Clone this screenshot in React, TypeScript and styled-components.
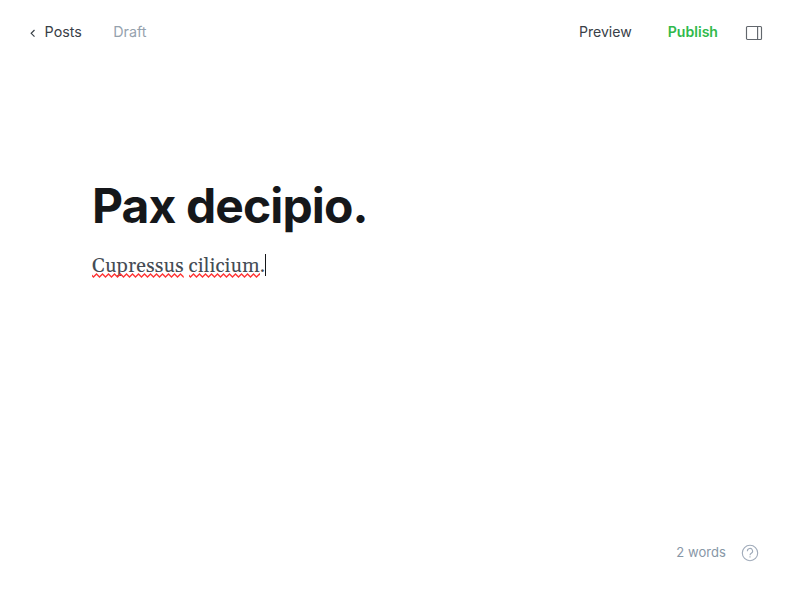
import React from "react";
import styled, { createGlobalStyle } from "styled-components";

const GlobalStyle = createGlobalStyle`
  * { box-sizing: border-box; }
  body { margin: 0; background: #fff; font-family: Inter, "Liberation Sans", sans-serif; }
`;

const Editor = styled.div`
  display: flex;
  flex-direction: column;
  width: 100%;
  height: 100vh;
  overflow: hidden;
`;

const Header = styled.header`
  display: flex;
  align-items: center;
  justify-content: space-between;
  height: 66px;
  padding: 0 37px 0 29px;
`;

const Group = styled.div`
  display: flex;
  align-items: center;
`;

const BackLink = styled.button`
  display: flex;
  align-items: center;
  gap: 7.6px;
  margin-right: 31.4px;
  padding: 0;
  border: 0;
  background: none;
  color: #394047;
  font: 400 14.3px/20px Inter, sans-serif;
`;

const Label = styled.span`
  padding-bottom: 2px;
`;

const Status = styled.span`
  padding-bottom: 2px;
  color: #95a1ad;
  font-size: 14.3px;
  line-height: 20px;
`;

const Action = styled.button<{ $primary?: boolean }>`
  margin-right: ${(p) => (p.$primary ? 27 : 36)}px;
  padding: 0 0 2px;
  border: 0;
  background: none;
  color: ${(p) => (p.$primary ? "#30b94b" : "#394047")};
  font: ${(p) => (p.$primary ? 600 : 400)} 14.1px/20px Inter, sans-serif;
`;

const Main = styled.main`
  flex: 1;
  padding: 112px 92px 0;
`;

const Title = styled.h1`
  margin: 0;
  color: #15171a;
  font-size: 48px;
  font-weight: 700;
  line-height: 56px;
  letter-spacing: -0.9px;
`;

const Body = styled.p`
  display: flex;
  align-items: center;
  margin: 16px 0 0;
  color: #454c54;
  font: 400 20px/32px Gelasio, Georgia, "Liberation Serif", serif;
  letter-spacing: 0.07px;
`;

const Misspelled = styled.span`
  position: relative;
`;

const Squiggle = styled.svg`
  position: absolute;
  left: 0;
  bottom: 1px;
  width: 100%;
  height: 5px;
`;

const Caret = styled.span`
  width: 1px;
  height: 22px;
  margin-bottom: 2px;
  background: #15171a;
`;

const Footer = styled.footer`
  display: flex;
  align-items: center;
  justify-content: flex-end;
  gap: 15px;
  height: 94px;
  padding-right: 41px;
  color: #8796a6;
  font-size: 13px;
`;

const WordCount = styled.span`
  padding-bottom: 2px;
  letter-spacing: 0.05px;
`;

function Word({ id, children }: { id: string; children: string }) {
  return (
    <Misspelled>
      {children}
      <Squiggle aria-hidden="true">
        <defs>
          <pattern id={id} width="6" height="5" patternUnits="userSpaceOnUse">
            <path d="M-1.5 1 1.5 4l3-3 3 3" fill="none" stroke="#f33" strokeWidth="1.4" />
          </pattern>
        </defs>
        <rect width="100%" height="5" fill={`url(#${id})`} />
      </Squiggle>
    </Misspelled>
  );
}

export default function App() {
  return (
    <Editor>
      <GlobalStyle />
      <Header>
        <Group>
          <BackLink>
            <svg width="8" height="10" viewBox="0 0 8 10" fill="none" stroke="currentColor" strokeWidth="1.2"><path d="M5.5 2 2.2 5.3l3.3 3.3" /></svg>
            <Label>Posts</Label>
          </BackLink>
          <Status>Draft</Status>
        </Group>
        <Group>
          <Action>Preview</Action>
          <Action $primary>Publish</Action>
          <svg width="18" height="16" viewBox="0 0 18 16" fill="none" stroke="#62676d" strokeWidth="1.15"><rect x="1.5" y="1.5" width="15" height="13" rx="1" /><path d="M12.6 1.5v13" /></svg>
        </Group>
      </Header>
      <Main>
        <Title>Pax decipio.</Title>
        <Body>
          <span>
            <Word id="squiggle-1">Cupressus</Word>{" "}
            <Word id="squiggle-2">cilicium</Word>.
          </span>
          <Caret />
        </Body>
      </Main>
      <Footer>
        <WordCount>2 words</WordCount>
        <svg width="18" height="18" viewBox="0 0 18 18" fill="none" stroke="#a0abba" strokeWidth="1.1"><circle cx="9" cy="9" r="7.7" /><path d="M6.4 7.2a2.6 2.6 0 1 1 3.9 2.1c-.9.5-1.3 1-1.3 1.9M9 12.3v1.2" /></svg>
      </Footer>
    </Editor>
  );
}
